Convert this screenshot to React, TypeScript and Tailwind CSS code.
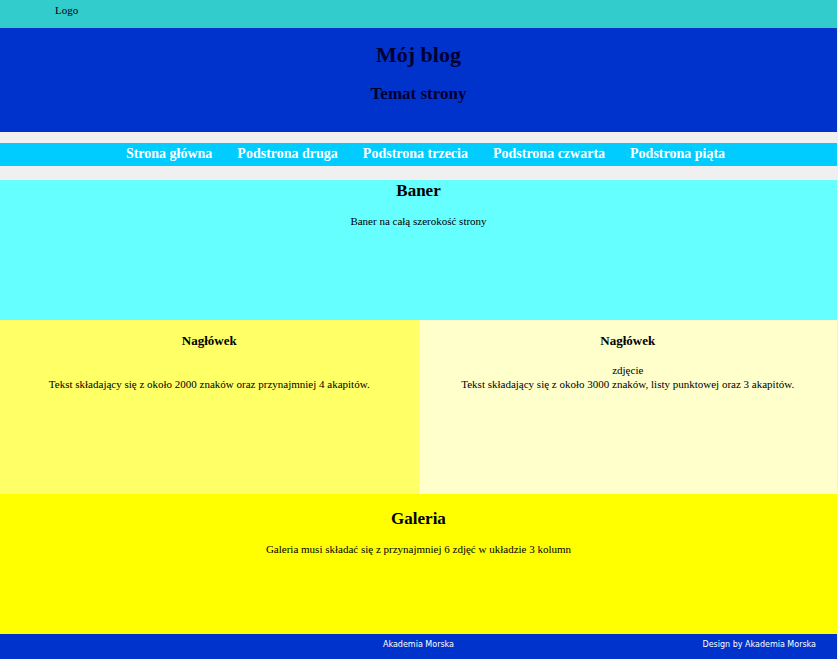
export default function App() {
  const links = ["Strona główna", "Podstrona druga", "Podstrona trzecia", "Podstrona czwarta", "Podstrona piąta"];

  return (
    <div className="min-h-[659px] bg-[#f0f0f0] font-['Liberation_Serif',serif] text-black">
      <div className="mr-[1px]">
        {/* top bar */}
        <div className="h-[28px] bg-[#33cccc] pl-[55px] pt-[4px] text-[11px] leading-[13px]">Logo</div>

        {/* header */}
        <header className="h-[104px] bg-[#0033cc] pt-[14px] text-center text-[#000033]">
          <h1 className="text-[22px] leading-[25px] font-bold">Mój blog</h1>
          <h2 className="mt-[17px] text-[17px] leading-[20px] font-bold">Temat strony</h2>
        </header>

        {/* nav */}
        <nav className="mt-[11px] h-[23px] bg-[#00ccff] pt-[3px] pl-[14px]">
          <ul className="flex justify-center gap-[25px] text-[14px] leading-[16px] font-bold text-white">
            {links.map((l) => (
              <li key={l}>{l}</li>
            ))}
          </ul>
        </nav>

        {/* banner */}
        <section className="mt-[14px] h-[140px] bg-[#66ffff] text-center">
          <h2 className="pt-px text-[17px] leading-[20px] font-bold">Baner</h2>
          <p className="mt-[13px] text-[11px] leading-[14px]">Baner na całą szerokość strony</p>
        </section>

        {/* columns */}
        <div className="grid h-[174px] grid-cols-2 text-center">
          <div className="bg-[#ffff66] pt-[13px]">
            <h3 className="text-[13px] leading-[15px] font-bold">Nagłówek</h3>
            <p className="mt-[29px] text-[11px] leading-[14px]">
              Tekst składający się z około 2000 znaków oraz przynajmniej 4 akapitów.
            </p>
          </div>
          <div className="bg-[#ffffcc] pt-[13px]">
            <h3 className="text-[13px] leading-[15px] font-bold">Nagłówek</h3>
            <div className="mt-[15px] text-[11px] leading-[14px]">zdjęcie</div>
            <p className="text-[11px] leading-[14px]">
              Tekst składający się z około 3000 znaków, listy punktowej oraz 3 akapitów.
            </p>
          </div>
        </div>

        {/* gallery */}
        <section className="h-[140px] bg-[#ffff00] pt-[15px] text-center">
          <h2 className="text-[17px] leading-[20px] font-bold">Galeria</h2>
          <p className="mt-[13px] text-[11px] leading-[14px]">
            Galeria musi składać się z przynajmniej 6 zdjęć w układzie 3 kolumn
          </p>
        </section>

        {/* footer */}
        <footer className="grid h-[25px] grid-cols-[1fr_auto_1fr] bg-[#0033cc] pt-[6px] font-['DejaVu_Sans',sans-serif] text-[8px] leading-[9px] text-white">
          <span />
          <span>Akademia Morska</span>
          <span className="justify-self-end pr-[21px]">Design by Akademia Morska</span>
        </footer>
      </div>
    </div>
  );
}
